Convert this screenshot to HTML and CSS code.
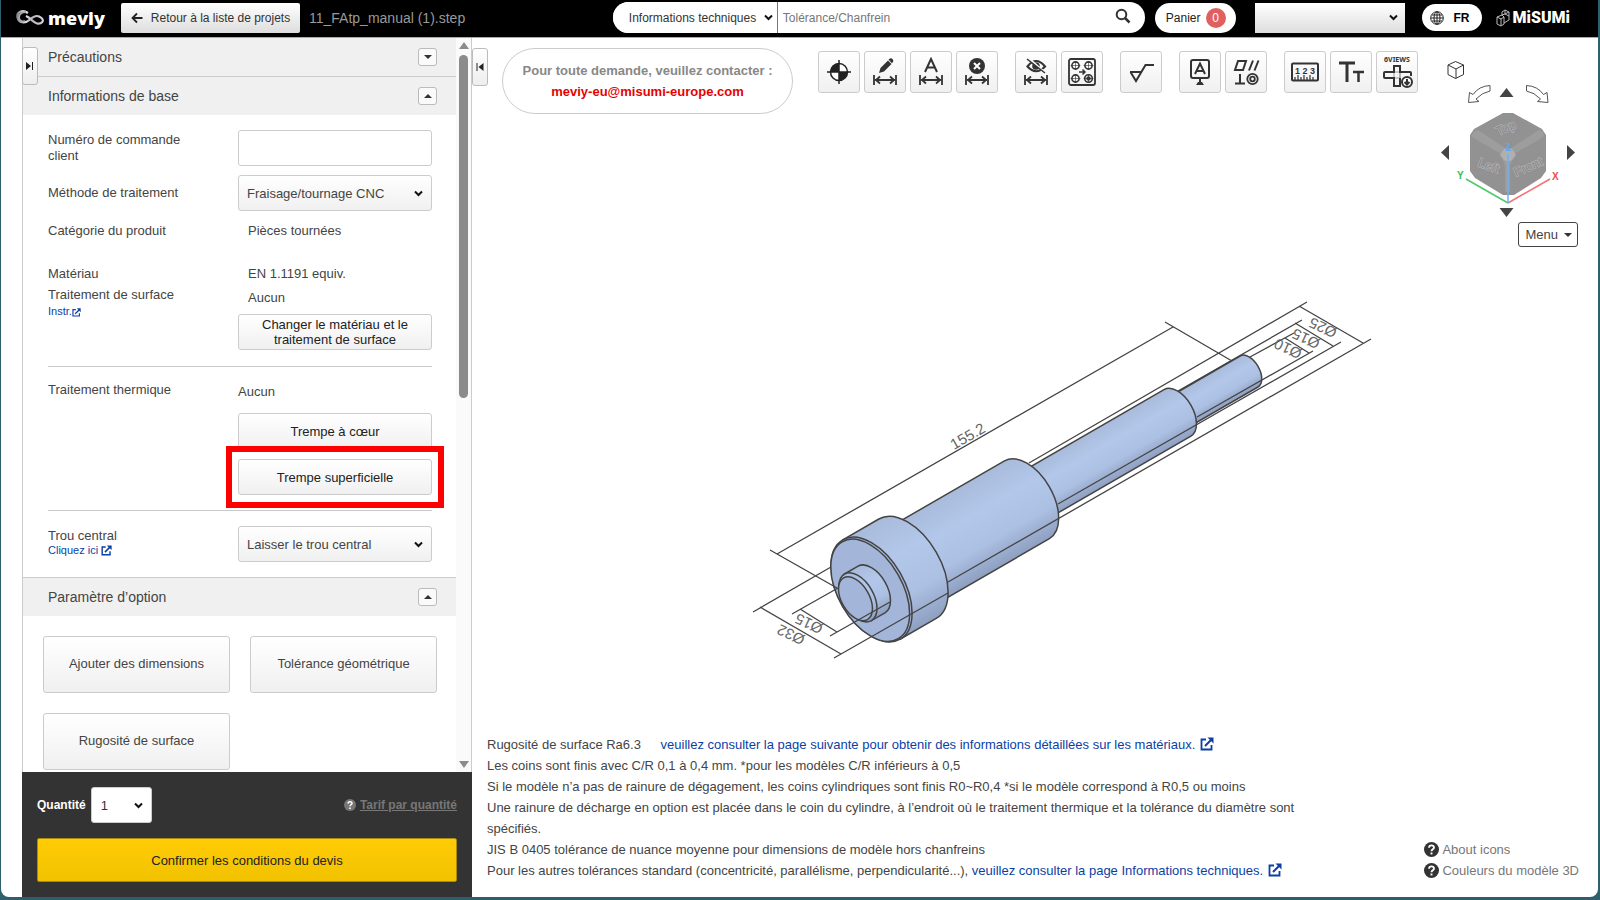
FILE: index.html
```html
<!DOCTYPE html>
<html lang="fr">
<head>
  <meta charset="utf-8">
  <title>meviy - 11_FAtp_manual (1).step</title>
  <meta name="viewport" content="width=device-width, initial-scale=1">
  <link rel="stylesheet" href="styles.css">
</head>
<body>
<svg class="defs" width="0" height="0" aria-hidden="true">
  <symbol id="ext" viewBox="0 0 14 14">
    <path d="M6 2.5H1.5v10h10V8" fill="none" stroke="currentColor" stroke-width="1.8"/>
    <path d="M5 9l6-6" fill="none" stroke="currentColor" stroke-width="2"/>
    <path d="M7.5 0.500H13.500V6.500z" fill="currentColor"/>
  </symbol>
  <symbol id="help" viewBox="0 0 14 14">
    <circle cx="7" cy="7" r="7" fill="currentColor"/>
    <path class="cut" d="M4.700 5.400c.1-3 4.800-2.800 4.600-.2C9.200 6.800 7 6.700 7 8.600" fill="none" stroke-width="1.700"/>
    <path class="cut" d="M7 9.800v1.800" fill="none" stroke-width="1.800"/>
  </symbol>
  <symbol id="arrows" viewBox="0 0 26 12">
    <path d="M2 1v10M24 1v10M3 6h20M8 2.500L4 6l4 3.500M18 2.500L22 6l-4 3.500" fill="none" stroke="#333" stroke-width="1.800"/>
  </symbol>
</svg>

<div class="window">
  <header class="topbar">
    <div class="logo">
      <svg width="28" height="16" viewBox="0 0 28 16">
        <defs>
          <linearGradient id="silver" x1="0" x2="1"><stop offset="0" stop-color="#8d8a90"/><stop offset=".3" stop-color="#e8e5ea"/><stop offset=".6" stop-color="#b9b5bb"/><stop offset="1" stop-color="#d8d4da"/></linearGradient>
        </defs>
        <path d="M12 3C6-1 .5 2 1.500 7.500S9 14 14 9.500 22 5 25.500 8 25 14.500 21 13.500 15 8 10 6" fill="none" stroke="url(#silver)" stroke-width="2.200"/>
        <path d="M10 2C6 2 3 4 3 7.500S6 12 9 11" fill="none" stroke="#aaa6ad" stroke-width="2"/>
      </svg>
      <span>meviy</span>
    </div>
    <button class="back">
      <svg width="12" height="12" viewBox="0 0 12 12"><path d="M11.500 6H2M6 1.500L1.500 6 6 10.500" fill="none" stroke="#222" stroke-width="1.800"/></svg>
      Retour à la liste de projets
    </button>
    <span class="filename">11_FAtp_manual (1).step</span>
    <form class="search">
      <select aria-label="Type de recherche"><option>Informations techniques</option></select>
      <input type="text" placeholder="Tolérance/Chanfrein" aria-label="Recherche">
      <button type="button" aria-label="Rechercher">
        <svg width="16" height="16" viewBox="0 0 16 16"><circle cx="6.500" cy="6.500" r="4.800" fill="none" stroke="#333" stroke-width="2"/><path d="M10 10l4.500 4.500" stroke="#333" stroke-width="2.500"/></svg>
      </button>
    </form>
    <button class="cart">Panier <span class="badge">0</span></button>
    <select class="account" aria-label="Compte"><option></option></select>
    <button class="lang">
      <svg width="14" height="14" viewBox="0 0 14 14" fill="none" stroke="#222"><circle cx="7" cy="7" r="6.300"/><ellipse cx="7" cy="7" rx="3" ry="6.300"/><path d="M7 1v12M1 7h12M2 4h10M2 10h10"/></svg>
      FR
    </button>
    <div class="misumi">
      <svg width="14" height="18" viewBox="0 0 14 18" fill="none" stroke="#bbb" stroke-width="1"><path d="M1 8l5-2 2 2v7l-3 2-4-2zM1 8l4 2 3-2M5 10v7M6 6V3l3-2 4 2v8l-5 3M9 1v4l4-2M6 6l3-1 4 2"/></svg>
      <span>MiSUMi</span>
    </div>
  </header>

  <main class="main">
    <div class="gutter"></div>
    <aside class="sidebar">
      <button class="tab tab-left" aria-label="Déplier">
        <svg width="8" height="8" viewBox="0 0 8 8"><path d="M0 0l5 4-5 4z" fill="#222"/><path d="M6.500 0v8" stroke="#222"/></svg>
      </button>
      <div class="scroll">
        <div class="content">
          <div class="section closed">
            <h2>Précautions</h2>
            <button class="toggle" aria-label="Ouvrir"><i class="tri down"></i></button>
          </div>
          <div class="section">
            <h2>Informations de base</h2>
            <button class="toggle" aria-label="Fermer"><i class="tri up"></i></button>
          </div>

          <div class="form">
            <div class="row order">
              <label for="order">Numéro de commande client</label>
              <input type="text" id="order" class="field">
            </div>
            <div class="row method">
              <label for="method">Méthode de traitement</label>
              <select id="method" class="field"><option>Fraisage/tournage CNC</option></select>
            </div>
            <div class="row category">
              <span>Catégorie du produit</span>
              <span class="value">Pièces tournées</span>
            </div>
            <div class="row material">
              <div class="names">
                <span>Matériau</span>
                <span>Traitement de surface</span>
                <a href="#">Instr.<svg width="9" height="9"><use href="#ext"/></svg></a>
              </div>
              <div class="values">
                <span class="value">EN 1.1191 equiv.</span>
                <span class="value">Aucun</span>
                <button class="btn">Changer le matériau et le traitement de surface</button>
              </div>
            </div>
            <hr>
            <div class="row heat">
              <span>Traitement thermique</span>
              <div class="values">
                <span>Aucun</span>
                <button class="btn">Trempe à cœur</button>
                <div class="marked"><button class="btn">Trempe superficielle</button></div>
              </div>
            </div>
            <hr>
            <div class="row hole">
              <div class="names">
                <label for="hole">Trou central</label>
                <a href="#">Cliquez ici <svg width="11" height="11"><use href="#ext"/></svg></a>
              </div>
              <select id="hole" class="field"><option>Laisser le trou central</option></select>
            </div>
          </div>

          <div class="section option">
            <h2>Paramètre d’option</h2>
            <button class="toggle" aria-label="Fermer"><i class="tri up"></i></button>
          </div>
          <div class="options">
            <button class="btn">Ajouter des dimensions</button>
            <button class="btn">Tolérance géométrique</button>
            <button class="btn">Rugosité de surface</button>
          </div>
        </div>
        <div class="scrollbar">
          <i class="tri up"></i>
          <div class="track"><div class="thumb"></div></div>
          <i class="tri down"></i>
        </div>
      </div>

      <div class="quote">
        <div class="qty">
          <label for="qty">Quantité</label>
          <select id="qty"><option>1</option></select>
          <a href="#"><svg width="12" height="12"><use href="#help"/></svg><span>Tarif par quantité</span></a>
        </div>
        <button class="confirm">Confirmer les conditions du devis</button>
      </div>
    </aside>

    <section class="viewer">
      <div class="viewer-top">
        <button class="tab" aria-label="Replier">
          <svg width="8" height="8" viewBox="0 0 8 8"><path d="M1 0v8" stroke="#222"/><path d="M7.500 0l-5 4 5 4z" fill="#222"/></svg>
        </button>
        <div class="contact">
          Pour toute demande, veuillez contacter :<br>
          <a href="#">meviy-eu@misumi-europe.com</a>
        </div>
        <div class="toolbar">
          <div class="group">
            <button class="tool" aria-label="Origine"><svg width="30" height="30" viewBox="0 0 30 30"><circle cx="15" cy="15" r="8.500" fill="#fff" stroke="#222" stroke-width="1.500"/><path d="M15 15V6.500A8.500 8.500 0 0 0 6.500 15zM15 15v8.500a8.500 8.500 0 0 0 8.500-8.500z" fill="#222"/><path d="M15 3v24M3 15h24" stroke="#222" stroke-width="1.500"/></svg></button>
            <button class="tool" aria-label="Modifier la cote"><svg width="30" height="30" viewBox="0 0 30 30"><path d="M9 16l1.500-5L18 3.500l3.500 3.500L14 14.500z" fill="#333"/><path d="M18.500 2.800L20 1.500q1.500-.5 2.500.5t.7 2.500L22 6.200z" fill="#333"/><use href="#arrows" x="2" y="17" width="26" height="12"/></svg></button>
            <button class="tool" aria-label="Ajouter une cote"><svg width="30" height="30" viewBox="0 0 30 30"><path d="M9 15l6-13 6 13M11 10.500h8" fill="none" stroke="#333" stroke-width="2"/><use href="#arrows" x="2" y="17" width="26" height="12"/></svg></button>
            <button class="tool" aria-label="Supprimer la cote"><svg width="30" height="30" viewBox="0 0 30 30"><circle cx="15" cy="9" r="8" fill="#333"/><path d="M12 6l6 6M18 6l-6 6" stroke="#fff" stroke-width="2"/><use href="#arrows" x="2" y="17" width="26" height="12"/></svg></button>
          </div>
          <div class="group">
            <button class="tool" aria-label="Masquer les cotes"><svg width="30" height="30" viewBox="0 0 30 30"><path d="M6.500 9.500Q15-1.500 24 9.500 15 19 6.500 9.500z" fill="none" stroke="#333" stroke-width="2.200"/><circle cx="15" cy="9" r="3.800" fill="#333"/><path d="M8 1.500l17 15" stroke="#f8f8f8" stroke-width="2"/><path d="M6 2l18 14" stroke="#333" stroke-width="1.500"/><use href="#arrows" x="2" y="17" width="26" height="12"/></svg></button>
            <button class="tool" aria-label="Trous"><svg width="30" height="30" viewBox="0 0 30 30" fill="none" stroke="#333"><rect x="2" y="2" width="26" height="26" rx="2" stroke-width="1.800"/><g stroke-width="1.600"><circle cx="8.500" cy="8.500" r="3.600"/><circle cx="21.500" cy="8.500" r="3.600"/><circle cx="8.500" cy="21.500" r="3.600"/><circle cx="21.500" cy="21.500" r="3.800"/></g><path d="M3.500 8.500h10M16.500 8.500h10M3.500 21.500h10M16.500 21.500h10M8.500 4v9M21.500 4v9M8.500 17v9M21.500 17v9" stroke-width=".6"/><circle cx="21.500" cy="21.500" r="1.800" fill="#333"/><path d="M12 15h6M15.500 12.500L18 15l-2.500 2.500" stroke-width="1.500"/></svg></button>
          </div>
          <div class="group">
            <button class="tool" aria-label="Rugosité"><svg width="30" height="30" viewBox="0 0 30 30" fill="none" stroke="#333" stroke-width="2"><path d="M4 15h12M4.500 15L10 24 19.500 8H28"/></svg></button>
          </div>
          <div class="group">
            <button class="tool" aria-label="Référence"><svg width="30" height="30" viewBox="0 0 30 30" fill="none" stroke="#333" stroke-width="2"><rect x="6" y="3" width="18" height="18" rx="2"/><path d="M10 17l5-10.500L20 17M11.500 14h7M15 21v4"/><path d="M11 28l2-3h4l2 3z" fill="#333" stroke="none"/></svg></button>
            <button class="tool" aria-label="Tolérances"><svg width="30" height="30" viewBox="0 0 30 30" fill="none" stroke="#333" stroke-width="2"><path d="M7 4h8l-3 9H4zM18 13.500l4-10M23.500 13.500l4-10M9 17v9M4 26.500h10"/><circle cx="21.500" cy="22" r="5.200" stroke-width="1.800"/><circle cx="21.500" cy="22" r="2.300" stroke-width="1.800"/></svg></button>
          </div>
          <div class="group">
            <button class="tool" aria-label="Mesure"><svg width="30" height="30" viewBox="0 0 30 30"><rect x="2" y="6.500" width="26" height="17" rx="1" fill="none" stroke="#333" stroke-width="2"/><path d="M5 23v-3M8 23v-5M11 23v-3M14 23v-5M17 23v-3M20 23v-5M23 23v-3" stroke="#333" stroke-width="1.200"/><text x="15" y="17" text-anchor="middle" class="num">1 2 3</text></svg></button>
            <button class="tool" aria-label="Texte"><svg width="30" height="30" viewBox="0 0 30 30" fill="none" stroke="#333"><path d="M3 6h16M11 6v19" stroke-width="3"/><path d="M17 15h11M22.500 15v10" stroke-width="2.500"/></svg></button>
            <button class="tool" aria-label="6 vues"><svg width="34" height="38" viewBox="0 0 34 38" fill="none" stroke="#333" stroke-width="2"><text x="17" y="9" text-anchor="middle" class="views">6VIEWS</text><path d="M14 19h6v6h-6zM20 19v6" stroke="#999" stroke-width="1"/><path d="M31 23v-3q0-1-1-1H20v-6h-6v6H5q-1 0-1 1v4q0 1 1 1h9v8h6v-8"/><circle cx="27" cy="29" r="5" fill="#fff"/><path d="M27 26v5M24.500 29l2.500 2.500 2.500-2.500"/></svg></button>
          </div>
        </div>

        <div class="nav">
          <svg width="140" height="166" viewBox="1438 54 140 166">
            <path d="M1448 65l7.500-3.500 8 3.500v9.500l-8 4-7.500-4zM1448 65l8 4 7.500-4M1456 69v9.500" fill="none" stroke="#333"/>
            <path d="M1490 85.500q-11 .5-17 9l-3.500-2-1 10 10.500-1-3-2.500q6-6.500 14-8zM1526.500 85.500q11 .5 17 9l3.500-2 1 10-10.500-1 3-2.500q-6-6.500-14-8z" fill="#fff" stroke="#555"/>
            <path d="M1499.500 97l7-9 7 9zM1499.500 208h14l-7 9zM1449 145v15l-8-7.500zM1567 145v15l8-7.500z" fill="#444"/>
            <path d="M1503 113h10l29 16 4 6v36l-5 7-27 17h-11l-28-17-5-7v-36l4-6z" fill="#929292"/>
            <path d="M1474 132l4-2 27 18h6l28-18 4 2 1 4-4 3-28 16v6l-2 5v26h-5v-26l-2-5v-6l-28-16-4-3z" fill="#9d9d9d"/>
            <path d="M1504 149h8l4 6-4 5-4 2-4-2-4-5z" fill="#b0b0b0"/>
            <g class="face">
              <text transform="translate(1498 136) rotate(-24)">Top</text>
              <text transform="translate(1477 166) rotate(20)">Left</text>
              <text transform="translate(1516 177) rotate(-24)">Front</text>
            </g>
            <path d="M1508 203l-42-24" stroke="#4fc96b" stroke-width="1.500"/>
            <path d="M1508 203l42-24" stroke="#f47174" stroke-width="1.500"/>
            <path d="M1508 203v-49" stroke="#6fb1f5" stroke-width="1.500"/>
            <text x="1457" y="179" class="axis y">Y</text><text x="1552" y="180" class="axis x">X</text><text x="1505" y="151" class="axis z">Z</text>
          </svg>
          <button class="menu">Menu <i class="tri down"></i></button>
        </div>
      </div>

      <div class="stage">
        <svg width="680" height="372" viewBox="695 292 680 372">
          <defs>
            <linearGradient id="tube" x1="0" y1="0" x2="0" y2="1"><stop offset="0" stop-color="#a9bbdb"/><stop offset=".35" stop-color="#b2c7ea"/><stop offset=".7" stop-color="#acc0e3"/><stop offset="1" stop-color="#8e9fc0"/></linearGradient>
          </defs>
          <!-- drawn along the shaft axis, far end first -->
          <g class="solid" transform="translate(871.500 589.500) rotate(-30)">
            <path d="M353-17.900H436A10.300 17.900 0 0 1 436 17.900H353z"/>
            <path d="M179-26.900H353.300A15.500 26.900 0 0 1 353.300 26.900H179z"/>
            <path d="M41-44.900H179.500A25.900 44.900 0 0 1 179.500 44.900H41z"/>
            <path d="M0-57.400H41.600A33.100 57.400 0 0 1 41.600 57.400H0z"/>
            <ellipse class="end" rx="33.100" ry="57.400"/>
            <ellipse class="end" cx="-1.500" rx="32" ry="56"/>
            <path d="M-15.600-26.900H0A15.500 26.900 0 0 1 0 26.900H-15.600z"/>
            <ellipse cx="-15.600" rx="15.500" ry="26.900"/>
            <ellipse class="end" cx="-18.500" rx="13.900" ry="24"/>
          </g>
          <path class="dim" d="M777 554L1173 327M770 550L837 588M1165 322L1232 361
            M753 612L831 567M834 658L948 593M760 607L841 654
            M792 614L838 588M830 636L890 602M800 609L837 632
            M1307 302L1029 463M1371 339L948 582M1299 306L1363 343
            M1302 320L1178 391M1341 342L1058 504M1295 323L1333 346
            M1294 333L1250 357M1313 351L1197 417M1285 338L1309 353"/>
          <g class="dim-text">
            <text transform="translate(954 450) rotate(-30)">155.2</text>
            <text transform="translate(806 636) rotate(205)">Ø32</text>
            <text transform="translate(824 625) rotate(205)">Ø15</text>
            <text transform="translate(1338 329) rotate(205)">Ø25</text>
            <text transform="translate(1321 340) rotate(205)">Ø15</text>
            <text transform="translate(1303 350) rotate(205)">Ø10</text>
          </g>
        </svg>
      </div>

      <div class="viewer-bottom">
        <div class="notes">
          <p>Rugosité de surface Ra6.3 <a class="first" href="#">veuillez consulter la page suivante pour obtenir des informations détaillées sur les matériaux. <svg width="14" height="14"><use href="#ext"/></svg></a></p>
          <p>Les coins sont finis avec C/R 0,1 à 0,4 mm. *pour les modèles C/R inférieurs à 0,5</p>
          <p>Si le modèle n’a pas de rainure de dégagement, les coins cylindriques sont finis R0~R0,4 *si le modèle correspond à R0,5 ou moins</p>
          <p>Une rainure de décharge en option est placée dans le coin du cylindre, à l’endroit où le traitement thermique et la tolérance du diamètre sont spécifiés.</p>
          <p>JIS B 0405 tolérance de nuance moyenne pour dimensions de modèle hors chanfreins</p>
          <p>Pour les autres tolérances standard (concentricité, parallélisme, perpendicularité...), <a href="#">veuillez consulter la page Informations techniques. <svg width="14" height="14"><use href="#ext"/></svg></a></p>
        </div>
        <div class="help">
          <a href="#"><svg width="15" height="15"><use href="#help"/></svg>About icons</a>
          <a href="#"><svg width="15" height="15"><use href="#help"/></svg>Couleurs du modèle 3D</a>
        </div>
      </div>
    </section>
  </main>
</div>
</body>
</html>
```
FILE: styles.css
```css
* {
  box-sizing: border-box;
}
body {
  margin: 0;
  height: 100vh;
  padding: 0 2px 3px 1px;
  background: #2f5f6e;
  font-family: "Liberation Sans", Arial, sans-serif;
  font-size: 13px;
  line-height: 16px;
  color: #444;
}
button, select, input {
  font-family: inherit;
  font-size: 13px;
  margin: 0;
}
button {
  cursor: pointer;
}
select {
  --chevron: url("data:image/svg+xml,%3Csvg xmlns='http://www.w3.org/2000/svg' width='9' height='7'%3E%3Cpath d='M1 1.500l3.500 3.500L8 1.500' fill='none' stroke='%23111' stroke-width='2'/%3E%3C/svg%3E");
  appearance: none;
}
a {
  color: #0b3fa5;
  text-decoration: none;
}
.defs {
  position: absolute;
}
.window {
  height: 100%;
  display: flex;
  flex-direction: column;
  background: #fff;
  border-radius: 0 0 8px 8px;
  overflow: hidden;
}

/* top bar */
.topbar {
  display: flex;
  align-items: center;
  flex: none;
  height: 38px;
  padding: 0 28px 2px 15px;
  background: #000;
  border-bottom: 1px solid #aaa;
}
.topbar button, .topbar select, .topbar input {
  font-size: 12px;
}
.logo {
  display: flex;
  align-items: center;
  gap: 4px;
  width: 105px;
  color: #fff;
  font: 800 18px/30px "Open Sans", sans-serif;
}
.back {
  display: flex;
  align-items: center;
  justify-content: center;
  gap: 8px;
  width: 179px;
  height: 30px;
  padding: 0;
  border: 0;
  border-radius: 2px;
  background: linear-gradient(#fff, #ddd);
  color: #333;
}
.filename {
  margin-left: 9px;
  font-size: 14px;
  color: #999;
}
.search {
  display: flex;
  width: 532px;
  height: 31px;
  margin-left: auto;
  border-radius: 16px;
  background: #fff;
  overflow: hidden;
}
.search select {
  width: 165px;
  padding: 0 0 0 16px;
  border: 0;
  border-right: 1px solid #777;
  background: #fff var(--chevron) no-repeat right 4px center;
  color: #333;
}
.search input {
  flex: 1;
  min-width: 0;
  padding: 0 5px;
  border: 0;
}
.search input::placeholder {
  color: #777;
}
.search button {
  width: 44px;
  padding: 0 14px;
  border: 0;
  background: none;
}
.cart {
  display: flex;
  align-items: center;
  gap: 5px;
  height: 30px;
  margin-left: 10px;
  padding: 0 10px 0 11px;
  border: 0;
  border-radius: 15px;
  background: #fff;
  color: #222;
}
.badge {
  width: 20px;
  height: 20px;
  border-radius: 10px;
  background: #e06060;
  color: #fff;
  line-height: 20px;
}
.account {
  width: 150px;
  height: 30px;
  margin: 0 17px 0 19px;
  border: 0;
  border-radius: 0;
  background: var(--chevron) no-repeat right 7px center, linear-gradient(#fff, #ddd);
}
.lang {
  display: flex;
  align-items: center;
  gap: 10px;
  width: 60px;
  height: 27px;
  padding: 0 8px;
  border: 0;
  border-radius: 14px;
  background: #fff;
  color: #000;
  font-weight: bold;
}
.misumi {
  display: flex;
  align-items: center;
  gap: 3px;
  margin-left: 14px;
  color: #fff;
  font: 900 16px/20px Roboto, sans-serif;
}

/* sidebar */
.main {
  display: flex;
  flex: 1;
  min-height: 0;
}
.gutter {
  width: 21px;
}
.sidebar {
  position: relative;
  display: flex;
  flex-direction: column;
  width: 450px;
  border: solid #ccc;
  border-width: 0 1px;
}
.tab {
  display: flex;
  align-items: center;
  justify-content: center;
  flex: none;
  width: 16px;
  height: 38px;
  padding: 0;
  border: 1px solid #bbb;
  border-radius: 3px;
  background: linear-gradient(#fff, #eee);
}
.tab-left {
  position: absolute;
  left: -1px;
  top: 9px;
}
.scroll {
  display: flex;
  flex: 1;
  min-height: 0;
  overflow: hidden;
}
.content {
  flex: 1;
}
.section {
  display: flex;
  align-items: center;
  justify-content: space-between;
  height: 38px;
  padding: 0 19px 0 25px;
  background: #f0f0f0;
}
.section.closed {
  height: 39px;
  border-bottom: 1px solid #ccc;
}
.section.option {
  height: 39px;
  border-top: 1px solid #ccc;
}
.section h2 {
  margin: 0;
  font-size: 14px;
  font-weight: normal;
}
.toggle {
  display: flex;
  align-items: center;
  justify-content: center;
  width: 19px;
  height: 18px;
  padding: 0;
  border: 1px solid #bbb;
  border-radius: 3px;
  background: #fafafa;
}
.tri {
  border: solid transparent;
  border-width: 0 4px;
}
.tri.down {
  border-top: 4px solid #333;
}
.tri.up {
  border-bottom: 4px solid #333;
}
.form {
  padding: 15px 24px 15px 25px;
}
.row {
  display: grid;
  grid-template-columns: 190px 1fr;
}
.order label {
  width: 150px;
  padding-top: 2px;
}
.method {
  align-items: center;
  margin: 9px 0 12px;
}
.field, .btn {
  width: 100%;
  height: 36px;
  border: 1px solid #ccc;
  border-radius: 3px;
  color: #444;
  background: #fff;
}
select.field {
  padding: 0 8px;
  background: var(--chevron) no-repeat right 8px center, linear-gradient(#fff, #f0f0f0);
}
.btn {
  padding: 0;
  background: linear-gradient(#fff, #f0f0f0);
  line-height: 15px;
  color: #222;
}
.value {
  padding-left: 10px;
}
.names, .values {
  display: flex;
  flex-direction: column;
}
.names a {
  font-size: 11px;
}
.material {
  margin-top: 27px;
  padding-bottom: 1px;
}
.material .names {
  gap: 5px;
}
.material .names a {
  margin-top: -5px;
}
.material .values {
  gap: 8px;
}
.material .btn {
  padding: 0 20px;
}
hr {
  margin: 15px 0;
  border: 0;
  border-top: 1px solid #ccc;
}
.heat .values {
  gap: 10px;
  padding-top: 2px;
}
.heat .values > span {
  padding-bottom: 3px;
}
.marked {
  position: relative;
}
.marked::after {
  content: "";
  position: absolute;
  inset: -13px -12px;
  border: 6px solid #f00;
}
.hole .names a {
  line-height: 13px;
}
.hole .names {
  padding-top: 2px;
}
.options {
  display: grid;
  grid-template-columns: 1fr 1fr;
  gap: 20px;
  padding: 20px 19px 0 20px;
}
.options .btn {
  height: 57px;
  padding-bottom: 3px;
  color: #444;
}
.scrollbar {
  display: flex;
  flex-direction: column;
  align-items: center;
  width: 15px;
  padding: 4px 0;
  background: #fafafa;
}
.scrollbar .tri {
  border-left-width: 5px;
  border-right-width: 5px;
}
.scrollbar .tri.up {
  border-bottom: 7px solid #8b8b8b;
}
.scrollbar .tri.down {
  border-top: 7px solid #8b8b8b;
}
.track {
  flex: 1;
  width: 9px;
  padding: 6px 0;
}
.thumb {
  height: 49%;
  border-radius: 5px;
  background: #8b8b8b;
}
.quote {
  height: 125px;
  margin: 0 -1px;
  padding: 15px;
  background: #333;
}
.qty {
  display: flex;
  align-items: center;
  gap: 5px;
  margin-bottom: 15px;
  color: #fff;
  font-size: 12px;
  font-weight: bold;
}
.qty select {
  width: 61px;
  height: 36px;
  padding: 0 9px;
  border: 1px solid #ccc;
  border-radius: 3px;
  background: #fff var(--chevron) no-repeat right 8px center;
  color: #333;
}
.qty a {
  display: flex;
  align-items: center;
  gap: 4px;
  margin-left: auto;
  color: #777;
}
.qty a span {
  text-decoration: underline;
}
.cut {
  stroke: #fff;
}
.qty .cut {
  stroke: #333;
}
.confirm {
  width: 100%;
  height: 44px;
  border: 1px solid #a88a10;
  border-radius: 2px;
  background: linear-gradient(#ffcc05, #f2c200);
  color: #222;
}

/* viewer */
.viewer {
  display: flex;
  flex-direction: column;
  flex: 1;
  min-width: 0;
}
.viewer-top {
  display: flex;
  align-items: flex-start;
  padding: 10px 20px 0 0;
}
.contact {
  flex: none;
  width: 291px;
  height: 66px;
  margin-left: 14px;
  padding: 11px 0;
  border: 1px solid #ccc;
  border-radius: 33px;
  line-height: 21px;
  font-weight: bold;
  text-align: center;
  color: #888;
}
.contact a {
  color: #e80000;
}
.toolbar {
  display: flex;
  gap: 17px;
  margin: 3px 0 0 25px;
}
.group {
  display: flex;
  gap: 4px;
}
.tool {
  display: flex;
  align-items: center;
  justify-content: center;
  width: 42px;
  height: 42px;
  padding: 0;
  border: 1px solid #ccc;
  border-radius: 3px;
  background: linear-gradient(#fff, #f0f0f0);
}
.num {
  font: bold 9px "Liberation Sans", sans-serif;
  fill: #333;
  stroke: none;
}
.views {
  font: bold 7px "Noto Sans", sans-serif;
  fill: #333;
  stroke: none;
}
.nav {
  display: flex;
  flex-direction: column;
  align-items: flex-end;
  margin-left: auto;
  padding-top: 6px;
}
.face text {
  font-size: 13px;
  fill: #8a8a8a;
  stroke: #bcbcbc;
  stroke-width: 1px;
  paint-order: stroke;
}
.axis {
  font-size: 10px;
  font-weight: bold;
}
.axis.x {
  fill: #f04a50;
}
.axis.y {
  fill: #2fc04f;
}
.axis.z {
  fill: #5aa7f5;
}
.menu {
  display: flex;
  align-items: center;
  gap: 6px;
  height: 25px;
  margin-top: 2px;
  padding: 0 5px 0 6px;
  border: 1px solid #444;
  border-radius: 3px;
  background: #fff;
  color: #444;
}
.stage {
  display: flex;
  flex: 1;
  justify-content: center;
  align-items: center;
  min-height: 0;
  padding-bottom: 26px;
}
.solid path, .solid ellipse {
  fill: url(#tube);
  stroke: #444;
  stroke-width: 1.5px;
}
.solid .end {
  fill: #a3b6d9;
}
.dim {
  fill: none;
  stroke: #444;
  stroke-width: 1.3px;
}
.dim-text text {
  font-size: 15px;
  fill: #666;
}
.viewer-bottom {
  display: flex;
  justify-content: space-between;
  align-items: flex-end;
  padding: 0 19px 16px 15px;
  line-height: 21px;
}
.notes {
  width: 820px;
}
.notes p {
  margin: 0;
}
.notes a svg, .names a svg {
  vertical-align: -2px;
}
.notes a.first {
  margin-left: 16px;
}
.notes a svg {
  margin-left: 1px;
}
.help a {
  display: flex;
  align-items: center;
  gap: 3px;
  color: #777;
}
.help svg {
  color: #333;
}
```
